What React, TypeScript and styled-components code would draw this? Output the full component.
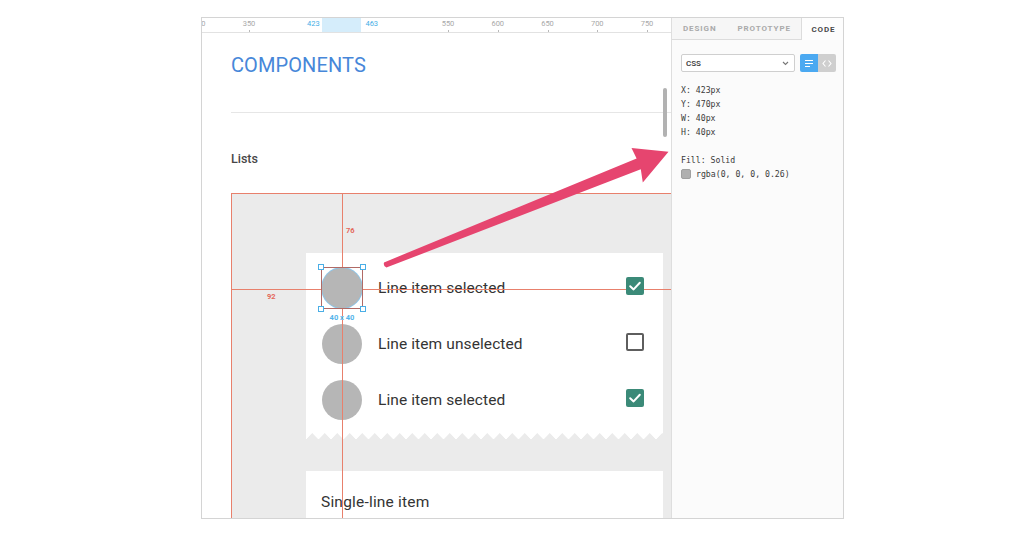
import React from 'react'
import styled, { createGlobalStyle } from 'styled-components'

const GlobalStyle = createGlobalStyle`
  html, body {
    margin: 0;
    padding: 0;
    background: #fff;
  }
  body {
    font-family: Roboto, "Liberation Sans", sans-serif;
  }
`

type RowItem = {
  label: string
  checked: boolean
  selected?: boolean
}

const rows: RowItem[] = [
  { label: 'Line item selected', checked: true, selected: true },
  { label: 'Line item unselected', checked: false },
  { label: 'Line item selected', checked: true },
]

const rulerMarks = [300, 350, 550, 600, 650, 700, 750]
const rulerX = (v: number) => 47 + (v - 350) * 0.995

const propLines = ['X: 423px', 'Y: 470px', 'W: 40px', 'H: 40px']

const App = () => {
  return (
    <Page>
      <GlobalStyle />
      <Window>
        <Canvas>
          <Ruler>
            <RulerBand style={{ left: rulerX(423), width: rulerX(463) - rulerX(423) }} />
            {rulerMarks.map((v) => (
              <RulerMark key={v} style={{ left: rulerX(v) }}>
                <span>{v}</span>
              </RulerMark>
            ))}
            <RulerLabel $side="left" style={{ left: rulerX(423) - 2 }}>
              423
            </RulerLabel>
            <RulerLabel $side="right" style={{ left: rulerX(463) + 4 }}>
              463
            </RulerLabel>
          </Ruler>
          <CanvasBody>
            <Title>COMPONENTS</Title>
            <Divider />
            <SectionLabel>Lists</SectionLabel>
            <Artboard>
              <GuideH />
              <GuideV />
              <Measure $top={32} $left={114}>76</Measure>
              <Measure $top={98} $left={35}>92</Measure>
              <Card>
                <CardRows>
                  {rows.map((row, i) => (
                    <Row key={i}>
                      <Avatar $selected={row.selected}>
                        {row.selected && (
                          <>
                            <SelectBox />
                            <Handle $x="left" $y="top" />
                            <Handle $x="right" $y="top" />
                            <Handle $x="left" $y="bottom" />
                            <Handle $x="right" $y="bottom" />
                            <SizeTag>40 x 40</SizeTag>
                          </>
                        )}
                      </Avatar>
                      <RowText>{row.label}</RowText>
                      <Check $checked={row.checked}>
                        {row.checked && (
                          <svg width="18" height="18" viewBox="0 0 18 18">
                            <polyline
                              points="4.2,9.2 7.6,12.4 13.8,5.8"
                              fill="none"
                              stroke="#fff"
                              strokeWidth="2"
                              strokeLinecap="round"
                              strokeLinejoin="round"
                            />
                          </svg>
                        )}
                      </Check>
                    </Row>
                  ))}
                </CardRows>
                <Zigzag />
              </Card>
              <Card $single>
                <SingleRow>Single-line item</SingleRow>
              </Card>
            </Artboard>
            <Scrollbar />
          </CanvasBody>
        </Canvas>
        <Panel>
          <Tabs>
            <TabGroup>
              <Tab>DESIGN</Tab>
              <Tab>PROTOTYPE</Tab>
            </TabGroup>
            <ActiveTab>CODE</ActiveTab>
          </Tabs>
          <PanelBody>
            <Controls>
              <Select>
                <span>CSS</span>
                <svg width="7" height="5" viewBox="0 0 7 5">
                  <polyline points="1,1 3.5,3.5 6,1" fill="none" stroke="#777" strokeWidth="1.1" />
                </svg>
              </Select>
              <ToggleGroup>
                <Toggle $on>
                  <svg width="10" height="9" viewBox="0 0 10 9">
                    <path d="M1 1.5h8M1 4.5h8M1 7.5h5" stroke="#fff" strokeWidth="1.1" />
                  </svg>
                </Toggle>
                <Toggle>
                  <svg width="10" height="9" viewBox="0 0 10 9">
                    <path d="M3.5 1.5L1 4.5l2.5 3M6.5 1.5L9 4.5l-2.5 3" stroke="#fff" strokeWidth="1.1" fill="none" />
                  </svg>
                </Toggle>
              </ToggleGroup>
            </Controls>
            <Code>
              {propLines.map((l) => (
                <CodeLine key={l}>{l}</CodeLine>
              ))}
              <CodeLine />
              <CodeLine>Fill: Solid</CodeLine>
              <CodeLine>
                <Swatch />
                rgba(0, 0, 0, 0.26)
              </CodeLine>
            </Code>
          </PanelBody>
        </Panel>
      </Window>
      <Arrow viewBox="0 0 1024 538" width="1024" height="538">
        <path
          d="M384 262.4 L636.6 158.6 L631.5 148 L668.5 151.8 L642.8 182.5 L640.8 169.2 L386.4 267.6 Q383 266.5 384 262.4 Z"
          fill="#e6456f"
        />
      </Arrow>
    </Page>
  )
}

const Page = styled.div`
  position: relative;
  width: 1024px;
  height: 538px;
  overflow: hidden;
  box-sizing: border-box;
  padding: 17px 0 0 201px;
`

const Window = styled.div`
  width: 643px;
  height: 502px;
  box-sizing: border-box;
  border: 1px solid #d4d4d4;
  display: flex;
  overflow: hidden;
  background: #fff;
`

const Canvas = styled.div`
  width: 469px;
  display: flex;
  flex-direction: column;
  overflow: hidden;
`

const Ruler = styled.div`
  position: relative;
  height: 14px;
  flex-shrink: 0;
  border-bottom: 1px solid #e2e2e2;
  font-size: 7.5px;
  color: #a8a8a8;
  overflow: hidden;
`

const RulerBand = styled.div`
  position: absolute;
  top: 0;
  bottom: 0;
  background: #d5edfb;
`

const RulerMark = styled.div`
  position: absolute;
  top: 0;
  bottom: 0;
  width: 1px;
  span {
    position: absolute;
    top: 1px;
    left: 0;
    transform: translateX(-50%);
  }
  &::after {
    content: '';
    position: absolute;
    left: 0;
    bottom: 0;
    width: 1px;
    height: 2px;
    background: #b8b8b8;
  }
`

const RulerLabel = styled.span<{ $side: 'left' | 'right' }>`
  position: absolute;
  top: 1px;
  color: #45aee6;
  transform: ${(p) => (p.$side === 'left' ? 'translateX(-100%)' : 'none')};
`

const CanvasBody = styled.div`
  position: relative;
  flex: 1;
  padding: 20px 0 0 29px;
  overflow: hidden;
`

const Title = styled.h1`
  margin: 0;
  font-size: 20px;
  line-height: 24px;
  font-weight: 400;
  color: #4787d9;
  letter-spacing: 0.1px;
`

const Divider = styled.div`
  height: 1px;
  background: #e6e6e6;
  margin-top: 35px;
`

const SectionLabel = styled.h2`
  margin: 38px 0 0;
  font-size: 12.5px;
  line-height: 16px;
  font-weight: 500;
  color: #474747;
`

const Artboard = styled.div`
  position: relative;
  margin-top: 26px;
  height: 400px;
  background: #ebebeb;
  border-top: 1px solid #e8806c;
  border-left: 1px solid #e8806c;
  padding: 59px 8px 0 74px;
  display: flex;
  flex-direction: column;
  gap: 31px;
`

const GuideH = styled.div`
  position: absolute;
  z-index: 2;
  left: 0;
  right: 0;
  top: 95px;
  height: 1px;
  background: #e8806c;
`

const GuideV = styled.div`
  position: absolute;
  z-index: 2;
  top: 0;
  bottom: 0;
  left: 110px;
  width: 1px;
  background: #e8806c;
`

const Measure = styled.span<{ $top: number; $left: number }>`
  position: absolute;
  z-index: 2;
  top: ${(p) => p.$top}px;
  left: ${(p) => p.$left}px;
  font-size: 7.5px;
  font-weight: 700;
  color: #e4685a;
`

const Card = styled.div<{ $single?: boolean }>`
  position: relative;
  background: ${(p) => (p.$single ? '#fff' : 'transparent')};
  padding: ${(p) => (p.$single ? '7px 15px 0' : '0')};
  flex-shrink: 0;
  height: ${(p) => (p.$single ? '80px' : 'auto')};
`

const CardRows = styled.div`
  background: #fff;
  padding: 7px 19px 5px 16px;
  display: flex;
  flex-direction: column;
`

const Row = styled.div`
  height: 56px;
  display: flex;
  align-items: center;
  gap: 16px;
`

const Avatar = styled.div<{ $selected?: boolean }>`
  position: relative;
  z-index: ${(p) => (p.$selected ? 3 : 1)};
  width: 40px;
  height: 40px;
  flex-shrink: 0;
  border-radius: 50%;
  background: #b6b6b6;
  box-shadow: ${(p) => (p.$selected ? '0 0 0 1px #8cc6ea' : 'none')};
`

const SelectBox = styled.div`
  position: absolute;
  inset: -1px;
  border: 1px solid #b06a66;
`

const Handle = styled.div<{ $x: 'left' | 'right'; $y: 'top' | 'bottom' }>`
  position: absolute;
  width: 4px;
  height: 4px;
  border: 1px solid #4aaee6;
  background: #fff;
  ${(p) => p.$x}: -4px;
  ${(p) => p.$y}: -4px;
`

const SizeTag = styled.span`
  position: absolute;
  top: 45px;
  left: 50%;
  transform: translateX(-50%);
  white-space: nowrap;
  font-size: 7.5px;
  font-weight: 700;
  color: #55b4ea;
`

const RowText = styled.span`
  flex: 1;
  font-size: 15.5px;
  color: #343434;
  letter-spacing: 0.1px;
`

const Check = styled.div<{ $checked: boolean }>`
  position: relative;
  z-index: 3;
  width: 18px;
  height: 18px;
  box-sizing: border-box;
  border-radius: 2px;
  margin-top: -5px;
  background: ${(p) => (p.$checked ? '#3b8a78' : '#fff')};
  border: ${(p) => (p.$checked ? 'none' : '2px solid #5e5e5e')};
  svg {
    display: block;
  }
`

const Zigzag = styled.div`
  height: 7px;
  background: conic-gradient(from 138deg at 50% 0, #ebebeb 84deg, #fff 0);
  background-size: 12.5px 7px;
  background-repeat: repeat-x;
`

const SingleRow = styled.div`
  height: 48px;
  display: flex;
  align-items: center;
  font-size: 15.5px;
  letter-spacing: 0.2px;
  color: #343434;
`

const Scrollbar = styled.div`
  position: absolute;
  top: 55px;
  right: 4px;
  width: 4px;
  height: 49px;
  border-radius: 3px;
  background: #b2b2b2;
`

const Panel = styled.div`
  width: 172px;
  box-sizing: border-box;
  border-left: 1px solid #dedede;
  background: #fbfbfb;
  display: flex;
  flex-direction: column;
`

const Tabs = styled.div`
  display: flex;
  height: 22px;
`

const TabGroup = styled.div`
  flex: 1;
  display: flex;
  align-items: center;
  gap: 21px;
  padding-left: 11px;
  background: #f6f6f6;
  border-bottom: 1px solid #dcdcdc;
`

const Tab = styled.span`
  font-size: 8px;
  font-weight: 700;
  letter-spacing: 0.9px;
  color: #aaaaaa;
`

const ActiveTab = styled(Tab)`
  flex: 0 0 42px;
  display: flex;
  align-items: center;
  justify-content: center;
  box-sizing: border-box;
  padding-left: 2px;
  color: #4a4a4a;
  background: #fdfdfd;
  border-left: 1px solid #dcdcdc;
`

const PanelBody = styled.div`
  padding: 14px 7px 0 9px;
`

const Controls = styled.div`
  display: flex;
  align-items: center;
  gap: 5px;
`

const Select = styled.div`
  width: 114px;
  height: 18px;
  box-sizing: border-box;
  border: 1px solid #cfcfcf;
  border-radius: 2px;
  background: #fff;
  display: flex;
  align-items: center;
  justify-content: space-between;
  padding: 0 5px 0 4px;
  font-size: 8px;
  font-weight: 500;
  color: #333;
`

const ToggleGroup = styled.div`
  display: flex;
`

const Toggle = styled.div<{ $on?: boolean }>`
  width: 18px;
  height: 18px;
  display: flex;
  align-items: center;
  justify-content: center;
  background: ${(p) => (p.$on ? '#4ba9f1' : '#cfcfcf')};
  border-radius: ${(p) => (p.$on ? '2px 0 0 2px' : '0 2px 2px 0')};
`

const Code = styled.div`
  margin-top: 11px;
  font-family: "DejaVu Sans Mono", "Liberation Mono", monospace;
  font-size: 8.2px;
  color: #3a3a3a;
`

const CodeLine = styled.div`
  height: 14px;
  line-height: 14px;
  display: flex;
  align-items: center;
  white-space: pre;
`

const Swatch = styled.span`
  width: 8px;
  height: 8px;
  border-radius: 2px;
  background: #b0b0b0;
  border: 1px solid #a0a0a0;
  margin-right: 5px;
`

const Arrow = styled.svg`
  position: absolute;
  left: 0;
  top: 0;
  pointer-events: none;
`

export default App
